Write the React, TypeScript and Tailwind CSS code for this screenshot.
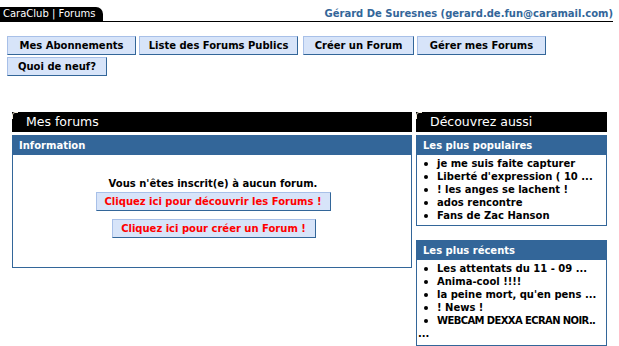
import React from "react";

const Corner = () => (
  <svg width="6" height="7" viewBox="0 0 6 7" className="absolute left-0 top-0">
    <path d="M0.5 7 V3 Q0.5 0.5 3 0.5 H6" stroke="#f2ead8" strokeWidth="1" fill="none" />
  </svg>
);

const NavBtn = ({ w, children }: { w: string; children: React.ReactNode }) => (
  <div
    className={`${w} h-[19px] flex items-center justify-center bg-[#d7e4f9] border border-t-[#a8c0e8] border-l-[#a8c0e8] border-b-[#336699] border-r-[#336699] text-[10px] font-bold text-black`}
  >
    {children}
  </div>
);

const RedBtn = ({ w, children }: { w: string; children: React.ReactNode }) => (
  <div
    className={`${w} h-[19px] flex items-center justify-center bg-[#d7e4f9] border border-t-[#a8c0e8] border-l-[#a8c0e8] border-b-[#336699] border-r-[#336699] text-[10px] font-bold text-[#ff0000]`}
  >
    {children}
  </div>
);

const PanelHead = ({ children }: { children: React.ReactNode }) => (
  <div className="relative h-[20px] bg-black text-white text-[12.5px] leading-[20px] pl-[14px]">
    <Corner />
    {children}
  </div>
);

const BoxTitle = ({ children }: { children: React.ReactNode }) => (
  <div className="h-[19px] bg-[#336699] text-white text-[10px] font-bold leading-[19px] pl-[6px]">
    {children}
  </div>
);

const Item = ({ children }: { children: React.ReactNode }) => (
  <li className="flex items-center h-[13px] whitespace-nowrap">
    <span className="w-[4px] h-[4px] rounded-full bg-black ml-[7px] mr-[9px] shrink-0" />
    <span>{children}</span>
  </li>
);

export default function App() {
  return (
    <div className="w-[619px] h-[346px] bg-white overflow-hidden font-['DejaVu_Sans',sans-serif] text-black">
      {/* top bar */}
      <div className="flex items-end justify-between pt-[7px] w-[613px] h-[22px] border-b border-black">
        <div className="h-[14px] w-[103px] bg-black rounded-tr-[7px] text-white text-[10px] leading-[14px] pl-[3px]">
          CaraClub | Forums
        </div>
        <div className="text-[10px] font-bold text-[#336699] leading-[13px] pb-[1px]">
          Gérard De Suresnes (gerard.de.fun@caramail.com)
        </div>
      </div>

      {/* nav buttons */}
      <div className="mt-[14px] pl-[7px] flex flex-col gap-[2px]">
        <div className="flex">
          <NavBtn w="w-[129px]">Mes Abonnements</NavBtn>
          <div className="w-[3px]" />
          <NavBtn w="w-[159px]">Liste des Forums Publics</NavBtn>
          <div className="w-[5px]" />
          <NavBtn w="w-[111px]">Créer un Forum</NavBtn>
          <div className="w-[3px]" />
          <NavBtn w="w-[129px]">Gérer mes Forums</NavBtn>
        </div>
        <div className="flex">
          <NavBtn w="w-[100px]">Quoi de neuf?</NavBtn>
        </div>
      </div>

      {/* main */}
      <div className="mt-[36px] pl-[12px] flex gap-[4px] items-start">
        <div className="w-[400px] flex flex-col gap-[3px]">
          <PanelHead>Mes forums</PanelHead>
          <div className="border border-[#336699] h-[133px]">
            <BoxTitle>Information</BoxTitle>
            <div className="flex flex-col items-center pt-[22px] pl-[2px]">
              <div className="text-[10px] font-bold leading-[13px]">Vous n'êtes inscrit(e) à aucun forum.</div>
              <div className="mt-[2px]">
                <RedBtn w="w-[235px]">Cliquez ici pour découvrir les Forums !</RedBtn>
              </div>
              <div className="mt-[8px] pl-[1px]">
                <RedBtn w="w-[204px]">Cliquez ici pour créer un Forum !</RedBtn>
              </div>
            </div>
          </div>
        </div>

        <div className="w-[191px] flex flex-col">
          <PanelHead>Découvrez aussi</PanelHead>
          <div className="mt-[3px] border border-[#336699] h-[91px]">
            <BoxTitle>Les plus populaires</BoxTitle>
            <ul className="pt-[2px] text-[10px] font-bold leading-[13px]">
              <Item>je me suis faite capturer</Item>
              <Item>Liberté d'expression ( 10 ...</Item>
              <Item>! les anges se lachent !</Item>
              <Item>ados rencontre</Item>
              <Item>Fans de Zac Hanson</Item>
            </ul>
          </div>
          <div className="mt-[14px] border border-[#336699] h-[106px] overflow-hidden">
            <BoxTitle>Les plus récents</BoxTitle>
            <ul className="pt-[2px] text-[10px] font-bold leading-[13px]">
              <Item>Les attentats du 11 - 09 ...</Item>
              <Item>Anima-cool !!!!</Item>
              <Item>la peine mort, qu'en pens ...</Item>
              <Item>! News !</Item>
              <Item><span className="tracking-[-0.6px]">WEBCAM DEXXA ECRAN NOIR..</span></Item>
              <li className="h-[13px] pl-[1px]">...</li>
            </ul>
          </div>
        </div>
      </div>
    </div>
  );
}
